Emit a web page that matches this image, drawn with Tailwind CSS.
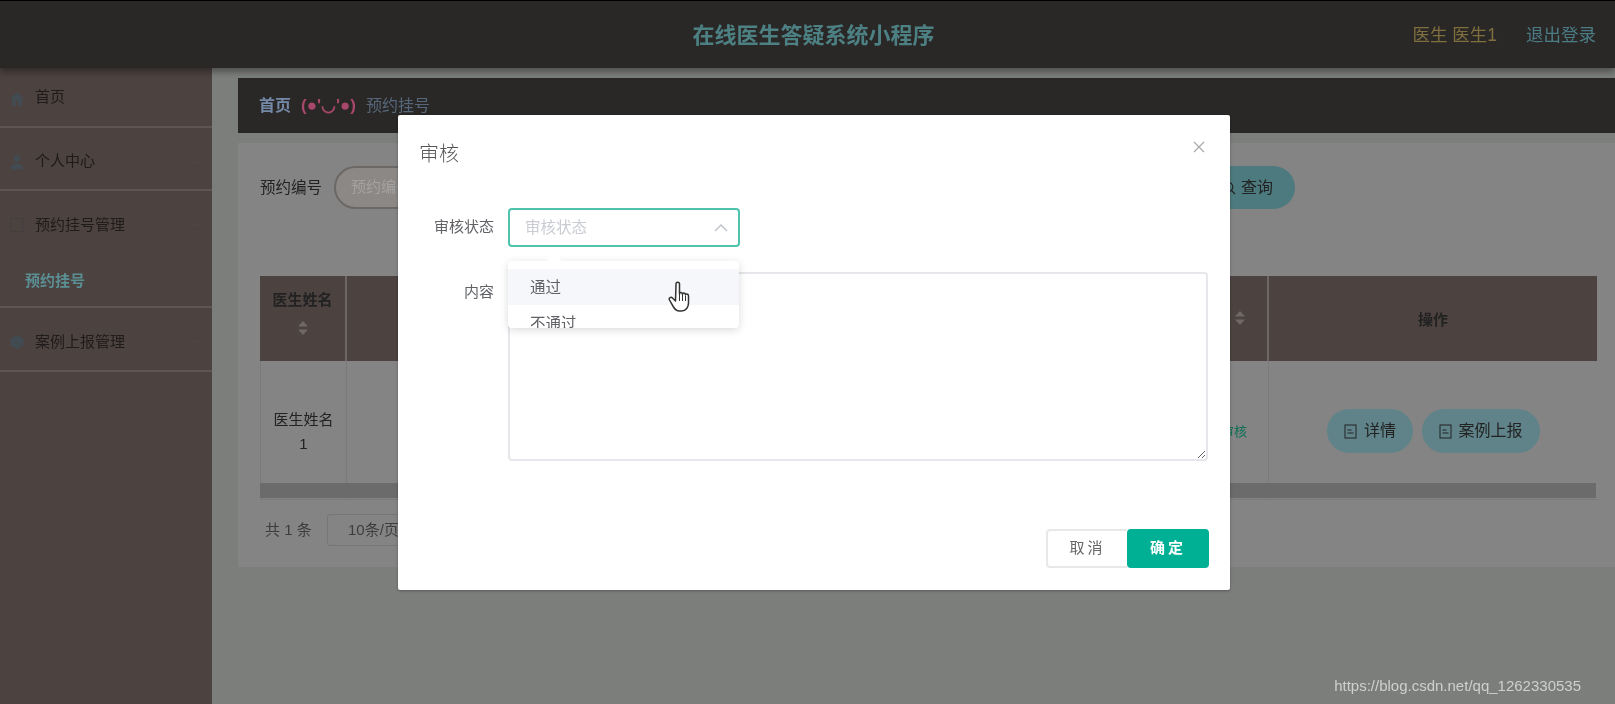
<!DOCTYPE html>
<html lang="zh-CN">
<head>
  <meta charset="UTF-8">
  <title>在线医生答疑系统小程序</title>
  <script src="https://cdn.jsdelivr.net/npm/@tailwindcss/browser@4"></script>
</head>
<body class="font-['Liberation_Sans','Noto_Sans_CJK_SC',sans-serif]">
<div class="relative w-[1615px] h-[704px] overflow-hidden bg-[#7c7e7c] text-[#222] blur-[0.4px]">

  <!-- header -->
  <header class="relative z-10 h-[68px] border-t border-black bg-[#2a2826] flex items-center justify-between shadow-[0_4px_6px_rgba(0,0,0,0.35)]">
    <div class="absolute inset-x-0 top-[18px] pl-[12px] text-center text-[22px] leading-[34px] font-bold text-[#4d8083]">在线医生答疑系统小程序</div>
    <div></div>
    <div class="relative flex items-center gap-[29px] pr-[19px] text-[17.5px] leading-[24px]">
      <span class="text-[#7f6e3e]">医生 医生1</span>
      <span class="text-[#4b7c86]">退出登录</span>
    </div>
  </header>

  <div class="flex h-[636px]">
    <!-- sidebar -->
    <aside class="w-[212px] shrink-0 bg-[#4c4240] text-[15px] text-[#1f1b1a]">
      <div class="h-[60px] flex items-center gap-[10px] pl-[9px] pt-[1px] border-b-2 border-[#5f5451]">
        <svg class="w-[16px] h-[16px] mt-[2px] text-[#424a52]" viewBox="0 0 16 16" fill="currentColor"><path d="M8 1 0.5 8H3v7h3.500v-4.500h3V15H13V8h2.500z"/></svg>
        <span>首页</span>
      </div>
      <div class="h-[63px] flex items-center gap-[10px] pl-[9px] pt-[6px] border-b-2 border-[#5f5451]">
        <svg class="w-[16px] h-[16px] text-[#424a52]" viewBox="0 0 16 16" fill="currentColor"><circle cx="8" cy="4.500" r="3.500"/><path d="M1.500 15.500c0-4 3-6 6.500-6s6.500 2 6.500 6z"/></svg>
        <span>个人中心</span>
        <svg class="ml-auto mr-[10px] w-[10px] h-[10px] text-[#554b48]" viewBox="0 0 10 10" fill="none" stroke="currentColor"><path d="M2 3.500l3 3 3-3"/></svg>
      </div>
      <div class="h-[117px] border-b-2 border-[#5f5451]">
        <div class="h-[62px] flex items-center gap-[10px] pl-[9px] pt-[6px]">
          <svg class="w-[16px] h-[16px] text-[#453e40]" viewBox="0 0 16 16" fill="none" stroke="currentColor"><rect x="2" y="1.500" width="12" height="13"/></svg>
          <span>预约挂号管理</span>
          <svg class="ml-auto mr-[10px] w-[10px] h-[10px] text-[#554b48]" viewBox="0 0 10 10" fill="none" stroke="currentColor"><path d="M2 6.500l3-3 3 3"/></svg>
        </div>
        <div class="pl-[25px] leading-[24px] pt-[16px] text-[#5a8f93] font-bold">预约挂号</div>
      </div>
      <div class="h-[64px] flex items-center gap-[10px] pl-[9px] pt-[6px] border-b-2 border-[#5f5451]">
        <svg class="w-[16px] h-[16px] text-[#424a52]" viewBox="0 0 16 16" fill="currentColor"><path d="M8 1l6.500 3.500v7L8 15l-6.500-3.500v-7z"/></svg>
        <span>案例上报管理</span>
        <svg class="ml-auto mr-[10px] w-[10px] h-[10px] text-[#554b48]" viewBox="0 0 10 10" fill="none" stroke="currentColor"><path d="M2 3.500l3 3 3-3"/></svg>
      </div>
    </aside>

    <!-- main -->
    <main class="flex-1 min-w-0 pl-[26px] pt-[10px]">
      <div class="h-[55px] bg-[#2a2826] flex items-center pl-[21px] pt-[1px] text-[16px]">
        <span class="font-bold text-[#7488a8]">首页</span>
        <span class="ml-[10px] text-[17px] font-bold text-[#a8476c]">(●'◡'●)</span>
        <span class="ml-[10px] text-[#56677c]">预约挂号</span>
      </div>

      <div class="mt-[10px] h-[424px] bg-[#848484] pl-[22px] pt-[23px]">
        <!-- search row -->
        <div class="flex items-center h-[43px]">
          <span class="w-[74px] text-[15.5px]">预约编号</span>
          <div class="w-[200px] h-[43px] rounded-full border-2 border-[#6b6866] bg-[#8b8886] pl-[15px] flex items-center text-[15px] text-[#a5a3a1]">预约编号</div>
          <div class="ml-[656px] w-[105px] h-[43px] rounded-r-full bg-[#4d7a7e] flex items-center justify-end pr-[22px] gap-[5px] text-[16px]">
            <svg class="w-[14px] h-[14px]" viewBox="0 0 14 14" fill="none" stroke="currentColor" stroke-width="1.200"><circle cx="6" cy="6" r="4.800"/><path d="M9.500 9.500 13 13"/></svg>
            查询
          </div>
        </div>

        <!-- table -->
        <div class="relative mt-[67px] w-[1337px] text-[15px]">
          <div class="flex h-[85px] bg-[#4c4240]">
            <div class="w-[87px] flex flex-col items-center pt-[12px] border-r-2 border-[#6e6664] font-bold">
              <span class="leading-[24px]">医生姓名</span>
              <svg class="mt-[9px] w-[10px] h-[14px] text-[#6f6866]" viewBox="0 0 10 14" fill="currentColor"><path d="M5 0l5 5.500H0zM5 14 0 8.500h10z"/></svg>
            </div>
            <div class="w-[922px] border-r-2 border-[#6e6664] flex justify-end items-center pr-[22px] pb-[2px]">
              <svg class="w-[10px] h-[14px] text-[#6f6866]" viewBox="0 0 10 14" fill="currentColor"><path d="M5 0l5 5.500H0zM5 14 0 8.500h10z"/></svg>
            </div>
            <div class="flex-1 flex items-center justify-center font-bold pt-[3px]">操作</div>
          </div>
          <div class="flex h-[139px] border-b border-l border-[#7a7a7a]">
            <div class="w-[86px] flex flex-col justify-center items-center leading-[24px] border-r border-[#7a7a7a] pt-[4px]">
              <span>医生姓名</span>
              <span>1</span>
            </div>
            <div class="w-[922px] border-r border-[#7a7a7a] flex justify-end items-center pr-[21px] pt-[4px] text-[13px] text-[#0f6f57]">待审核</div>
            <div class="flex-1 flex items-start pt-[48px] pl-[58px] gap-[9px] text-[16px]">
              <div class="w-[86px] h-[44px] rounded-full bg-[#5f8389] flex items-center justify-center gap-[7px]">
                <svg class="w-[13px] h-[15px]" viewBox="0 0 13 15" fill="none" stroke="currentColor"><rect x="1" y="1" width="11" height="13"/><path d="M3.500 6h4M3.500 9h6"/></svg>
                详情
              </div>
              <div class="w-[118px] h-[44px] rounded-full bg-[#5f8389] flex items-center justify-center gap-[6px]">
                <svg class="w-[13px] h-[15px]" viewBox="0 0 13 15" fill="none" stroke="currentColor"><rect x="1" y="1" width="11" height="13"/><path d="M3.500 6h4M3.500 9h6"/></svg>
                案例上报
              </div>
            </div>
          </div>
          <div class="absolute left-0 right-[1px] top-[207px] h-[15px] bg-[#6b6b6b]"></div>
        </div>

        <!-- pagination -->
        <div class="flex items-center mt-[14px] pl-[5px] text-[15px] text-[#3d3d3d]">
          <span class="w-[62px]">共 1 条</span>
          <div class="w-[120px] h-[32px] border border-[#767676] rounded-[3px] pl-[20px] flex items-center">10条/页</div>
        </div>
      </div>
    </main>
  </div>

  <!-- dialog layer -->
  <div class="absolute inset-0 z-20 flex justify-center items-start pl-[13px] pt-[115px]">
    <div class="w-[832px] h-[475px] bg-white rounded-[2px] shadow-[0_1px_3px_rgba(0,0,0,0.3)] flex flex-col">
      <div class="h-[93px] flex justify-between pl-[21px] pr-[25px] pt-[23px]">
        <span class="text-[20px] leading-[32px] font-light text-[#555]">审核</span>
        <svg class="w-[12px] h-[12px] mt-[3px]" viewBox="0 0 12 12" fill="none" stroke="#a9a9a9" stroke-width="1.200"><path d="M1 1l10 10M11 1 1 11"/></svg>
      </div>

      <div class="flex items-center h-[39px]">
        <label class="w-[96px] text-right text-[15px] text-[#606266]">审核状态</label>
        <div class="relative ml-[14px] w-[232px] h-[39px] rounded-[4px] border-2 border-[#4fc3ac] flex items-center justify-between pl-[15px] pr-[10px] text-[15.5px] text-[#c9ccd2]">
          <span class="pt-[1px]">审核状态</span>
          <svg class="w-[14px] h-[8px]" viewBox="0 0 14 8" fill="none" stroke="#c0c4cc" stroke-width="1.500"><path d="M1 7l6-6 6 6"/></svg>
          <!-- dropdown -->
          <div class="absolute z-10 left-[-2px] top-[51px] w-[231px] h-[67px] overflow-hidden rounded-[4px] bg-white shadow-[0_2px_8px_rgba(0,0,0,0.15)] pt-[8px] text-[15.5px] text-[#606266]">
            <div class="h-[36px] bg-[#f5f7fa] pl-[22px] pt-[1px] flex items-center">通过</div>
            <div class="h-[36px] pl-[22px] pt-[1px] flex items-center">不通过</div>
          </div>
          <div class="absolute z-10 left-[39px] top-[45px] w-[10px] h-[10px] rotate-45 bg-white"></div>
        </div>
      </div>

      <div class="flex mt-[25px] h-[189px]">
        <label class="w-[96px] text-right text-[15px] leading-[40px] text-[#606266]">内容</label>
        <textarea class="ml-[14px] w-[700px] h-[189px] rounded-[4px] border-2 border-[#e6e7eb] resize-y"></textarea>
      </div>

      <div class="flex justify-end mt-[68px] pr-[21px] text-[15px]">
        <div class="w-[81px] h-[39px] rounded-l-[4px] border-2 border-r-0 border-[#e8e8e8] flex items-center justify-center tracking-[3px] text-[#666]">取消</div>
        <div class="w-[82px] h-[39px] rounded-[4px] bg-[#00b094] flex items-center justify-center tracking-[3px] font-bold text-white">确定</div>
      </div>
    </div>
  </div>

  <!-- cursor -->
  <svg class="absolute z-30 left-[668px] top-[281px] w-[24px] h-[32px]" viewBox="0 0 24 32" fill="#fff" stroke="#333" stroke-width="1.500" stroke-linejoin="round">
    <path d="M8 3c0-2.500 3.500-2.500 3.500 0v10c0-2 3-2 3 .5 0-2 3-2 3 .5 0-1.500 3-1.500 3 1v7c0 4-2.500 8-7 8h-2c-3 0-4.500-1.500-6-4l-4-7c-1-2 1.500-3.500 3-2l3 3z"/>
    <path d="M11.500 13v7M14.500 14v6M17.500 15v5" fill="none" stroke-width="1"/>
  </svg>

  <div class="absolute z-30 right-[34px] bottom-[7px] text-[15px] text-[#cfcfcf]">https://blog.csdn.net/qq_1262330535</div>
</div>
</body>
</html>
